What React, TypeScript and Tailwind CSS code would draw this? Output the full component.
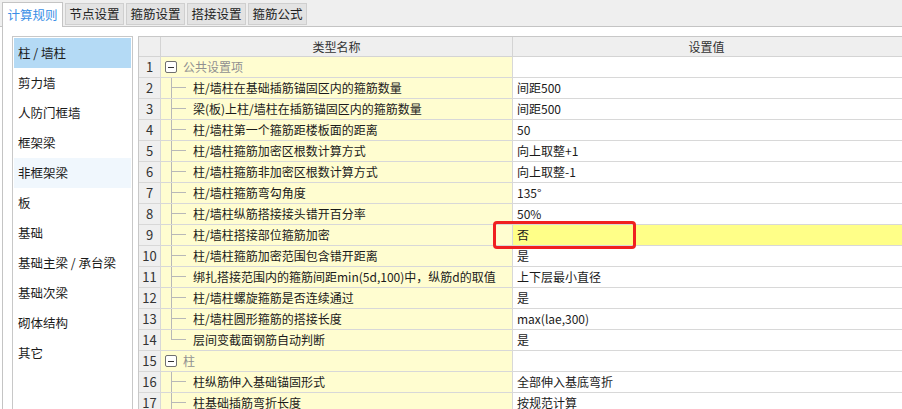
import React from "react";

type Row = {
  no: number;
  name: string;
  value?: string;
  group?: boolean;
  last?: boolean;
  hit?: boolean;
};

const rows: Row[] = [
  { no: 1, name: "公共设置项", group: true },
  { no: 2, name: "柱/墙柱在基础插筋锚固区内的箍筋数量", value: "间距500" },
  { no: 3, name: "梁(板)上柱/墙柱在插筋锚固区内的箍筋数量", value: "间距500" },
  { no: 4, name: "柱/墙柱第一个箍筋距楼板面的距离", value: "50" },
  { no: 5, name: "柱/墙柱箍筋加密区根数计算方式", value: "向上取整+1" },
  { no: 6, name: "柱/墙柱箍筋非加密区根数计算方式", value: "向上取整-1" },
  { no: 7, name: "柱/墙柱箍筋弯勾角度", value: "135°" },
  { no: 8, name: "柱/墙柱纵筋搭接接头错开百分率", value: "50%" },
  { no: 9, name: "柱/墙柱搭接部位箍筋加密", value: "否", hit: true },
  { no: 10, name: "柱/墙柱箍筋加密范围包含错开距离", value: "是" },
  { no: 11, name: "绑扎搭接范围内的箍筋间距min(5d,100)中，纵筋d的取值", value: "上下层最小直径" },
  { no: 12, name: "柱/墙柱螺旋箍筋是否连续通过", value: "是" },
  { no: 13, name: "柱/墙柱圆形箍筋的搭接长度", value: "max(lae,300)" },
  { no: 14, name: "层间变截面钢筋自动判断", value: "是", last: true },
  { no: 15, name: "柱", group: true },
  { no: 16, name: "柱纵筋伸入基础锚固形式", value: "全部伸入基底弯折" },
  { no: 17, name: "柱基础插筋弯折长度", value: "按规范计算" },
];

const tabs = ["计算规则", "节点设置", "箍筋设置", "搭接设置", "箍筋公式"];

const sideItems = [
  "柱 / 墙柱",
  "剪力墙",
  "人防门框墙",
  "框架梁",
  "非框架梁",
  "板",
  "基础",
  "基础主梁 / 承台梁",
  "基础次梁",
  "砌体结构",
  "其它",
];

function TreeLine({ last }: { last?: boolean }) {
  return (
    <div className="flex flex-col w-[15px] self-stretch ml-[10px]">
      <div className="h-[10px] border-l border-b border-[#b8b8b8]" />
      <div className={`flex-1 ${last ? "" : "border-l border-[#b8b8b8]"}`} />
    </div>
  );
}

function MinusBox() {
  return (
    <div className="ml-[4px] w-[12px] h-[12px] border border-[#707070] rounded-[2px] bg-white flex items-center justify-center">
      <div className="w-[6px] h-px bg-[#333]" />
    </div>
  );
}

export default function App() {
  return (
    <div className="w-[902px] h-[409px] overflow-hidden bg-white text-[12px] text-[#1a1a1a] font-['Microsoft_YaHei','Noto_Sans_CJK_SC',sans-serif] leading-[20px]">
      {/* tabs */}
      <div className="h-[27px] bg-[#efefef] border-b border-[#c4c4c4] flex items-end pl-[2px] gap-[2px]">
        {tabs.map((t, i) =>
          i === 0 ? (
            <div
              key={t}
              className="h-[25px] w-[61px] -mb-px bg-white border border-b-0 border-[#c4c4c4] text-[#3a8ee6] flex items-center justify-center text-[12.5px]"
            >
              {t}
            </div>
          ) : (
            <div
              key={t}
              className="h-[22px] w-[59px] mb-px bg-[#e3e3e3] border border-[#cfcfcf] text-[#222] flex items-center justify-center text-[12.5px]"
            >
              {t}
            </div>
          )
        )}
      </div>

      {/* body */}
      <div className="ml-[2px] border-l border-[#c4c4c4] h-[382px] flex pt-[9px]">
        {/* side list */}
        <div className="ml-[9px] w-[121px] h-[400px] border border-[#c8c8c8] p-px">
          {sideItems.map((s, i) => (
            <div
              key={s}
              className={`h-[30px] pl-[4px] flex items-center text-[12.5px] ${
                i === 0 ? "bg-[#b4daf5]" : i === 4 ? "bg-[#f0f7fd]" : ""
              }`}
            >
              {s}
            </div>
          ))}
        </div>

        {/* table */}
        <div className="ml-[5px] flex-1 border-t border-l border-[#c8c8c8] self-start">
          <div className="flex h-[20px] bg-[#efefef] border-b border-[#d4d4d4] text-[#333]">
            <div className="w-[22px] border-r border-[#d4d4d4]" />
            <div className="w-[352px] border-r border-[#d4d4d4] text-center leading-[19px]">类型名称</div>
            <div className="flex-1 text-center leading-[19px] pr-[2px]">设置值</div>
          </div>
          {rows.map((r) => (
            <div key={r.no} className="flex h-[21px] border-b border-[#d8d8d8]">
              <div className="w-[22px] shrink-0 bg-[#efefef] border-r border-[#d8d8d8] text-center text-[13px] text-[#333] leading-[20px]">
                {r.no}
              </div>
              <div className="w-[352px] shrink-0 bg-[#fffdd0] border-r border-[#d8d8d8] flex items-center">
                {r.group ? (
                  <>
                    <MinusBox />
                    <span className="ml-[6px] text-[#909090]">{r.name}</span>
                  </>
                ) : (
                  <>
                    <TreeLine last={r.last} />
                    <span className="ml-[7px] whitespace-nowrap">{r.name}</span>
                  </>
                )}
              </div>
              <div className={`relative flex-1 pl-[4px] flex items-center ${r.hit ? "bg-[#ffff88]" : ""}`}>
                {r.value}
                {r.hit && (
                  <div className="absolute left-[-20px] top-[-4px] w-[143px] h-[28px] border-[3px] border-[#f02020] rounded-[4px]" />
                )}
              </div>
            </div>
          ))}
        </div>
      </div>
    </div>
  );
}
